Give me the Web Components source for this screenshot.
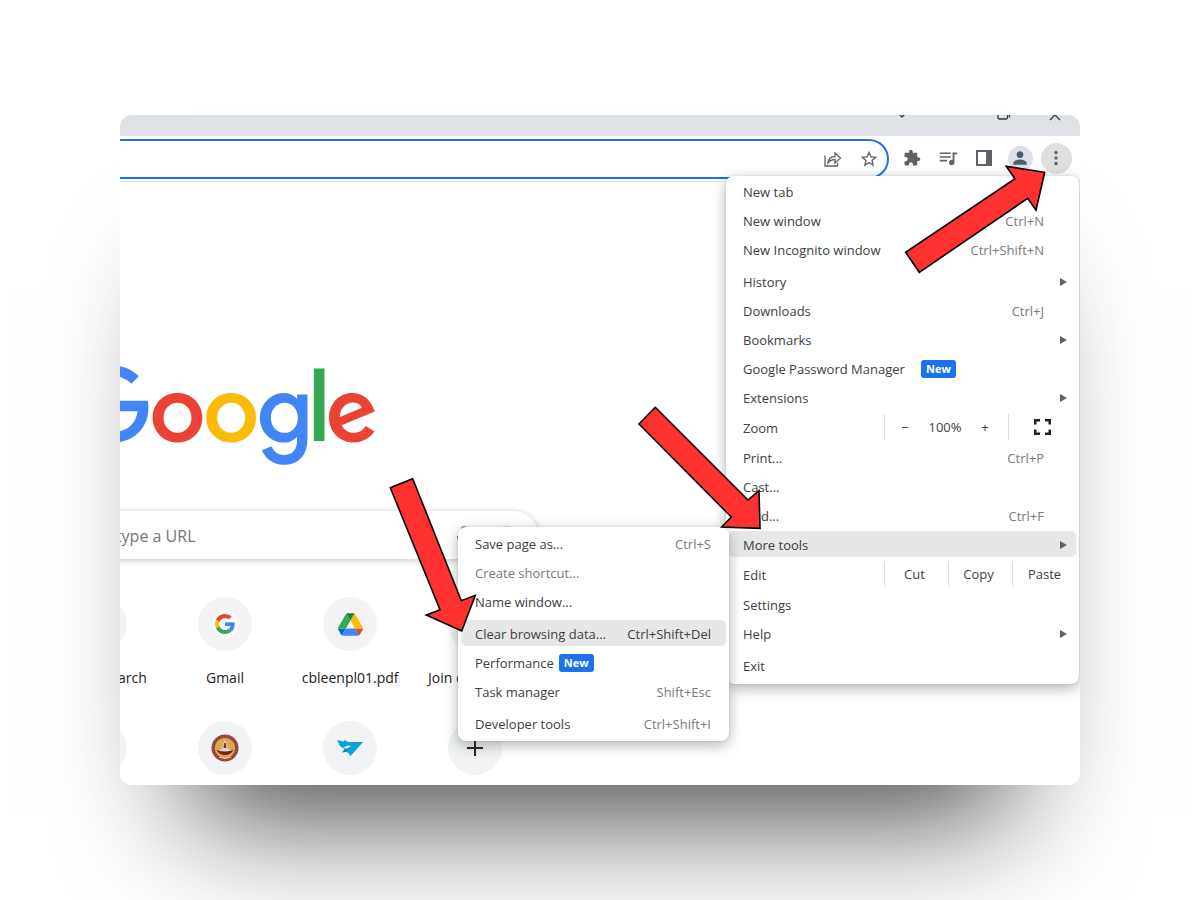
<!DOCTYPE html>
<html lang="en">
<head>
<meta charset="utf-8">
<title>Clear browsing data from the browser menu</title>
<style>
  body {
    margin: 0;
    min-height: 100vh;
    background: #fff;
    color: #3c4043;
    font: 13px/18px "Open Sans", "Noto Sans", sans-serif;
    overflow: hidden;
  }
</style>
</head>
<body>
<demo-stage>
  <browser-window>
    <tab-strip slot="tabs"></tab-strip>
    <tool-bar slot="toolbar"></tool-bar>
    <new-tab-page>
      <site-tile></site-tile>
      <site-tile>Google Search</site-tile>
      <site-tile icon="google">Gmail</site-tile>
      <site-tile icon="drive">cbleenpl01.pdf</site-tile>
      <site-tile>Join classroom</site-tile>
      <site-tile bare></site-tile>
      <site-tile bare></site-tile>
      <site-tile bare icon="lamp"></site-tile>
      <site-tile bare icon="bird"></site-tile>
      <site-tile bare icon="plus"></site-tile>
    </new-tab-page>

    <menu-panel slot="overlay" class="main">
      <menu-item>New tab</menu-item>
      <menu-item>New window<span slot="shortcut">Ctrl+N</span></menu-item>
      <menu-item>New Incognito window<span slot="shortcut">Ctrl+Shift+N</span></menu-item>
      <menu-item group submenu>History</menu-item>
      <menu-item>Downloads<span slot="shortcut">Ctrl+J</span></menu-item>
      <menu-item submenu>Bookmarks</menu-item>
      <menu-item>Google Password Manager<new-badge slot="badge" class="wide">New</new-badge></menu-item>
      <menu-item submenu>Extensions</menu-item>
      <zoom-row></zoom-row>
      <menu-item tall>Print...<span slot="shortcut">Ctrl+P</span></menu-item>
      <menu-item>Cast...</menu-item>
      <menu-item>Find...<span slot="shortcut">Ctrl+F</span></menu-item>
      <menu-item submenu active>More tools</menu-item>
      <edit-row></edit-row>
      <menu-item tall>Settings</menu-item>
      <menu-item submenu>Help</menu-item>
      <menu-item group>Exit</menu-item>
    </menu-panel>

    <menu-panel slot="overlay" class="sub">
      <menu-item>Save page as...<span slot="shortcut">Ctrl+S</span></menu-item>
      <menu-item disabled>Create shortcut...</menu-item>
      <menu-item>Name window...</menu-item>
      <menu-item group active>Clear browsing data...<span slot="shortcut">Ctrl+Shift+Del</span></menu-item>
      <menu-item>Performance<new-badge slot="badge">New</new-badge></menu-item>
      <menu-item>Task manager<span slot="shortcut">Shift+Esc</span></menu-item>
      <menu-item group>Developer tools<span slot="shortcut">Ctrl+Shift+I</span></menu-item>
    </menu-panel>

    <pointer-arrows slot="overlay"></pointer-arrows>
  </browser-window>
</demo-stage>

<script>
const define = (name, html, setup) => {
  const template = document.createElement('template');
  template.innerHTML = html;
  customElements.define(name, class extends HTMLElement {
    constructor() {
      super();
      this.attachShadow({ mode: 'open' }).append(template.content.cloneNode(true));
    }
    connectedCallback() {
      if (setup) setup(this, this.shadowRoot);
    }
  });
};

define('demo-stage', `
  <style>
    :host { display: flex; justify-content: center; padding: 115px 10% 0; }
    ::slotted(*) { flex: 1; min-width: 0; }
  </style>
  <slot></slot>`);

define('browser-window', `
  <style>
    :host { display: block; border-radius: 12px; box-shadow: 0 100px 120px -70px rgba(0,0,0,.75); }
    .frame { position: relative; overflow: hidden; border-radius: inherit; background: #fff; }
    ::slotted(menu-panel) { position: absolute; }
    ::slotted(.main) { top: 61px; right: 1px; width: 353px; }
    ::slotted(.sub) { top: 412px; right: 351px; width: 271px; padding: 3px 3px 5px; --arrow-col: 15px; }
    ::slotted(pointer-arrows) { position: absolute; top: 0; right: 0; }
  </style>
  <div class="frame">
    <slot name="tabs"></slot>
    <slot name="toolbar"></slot>
    <slot></slot>
    <slot name="overlay"></slot>
  </div>`);

define('tab-strip', `
  <style>
    :host { display: flex; justify-content: flex-end; align-items: flex-start; height: 21px; background: #dee1e6; }
    button { width: 51px; height: 8px; padding: 0; border: 0; background: none; display: flex; justify-content: center; }
    .first { margin-right: 51px; }
    svg { display: block; fill: none; stroke: #333; stroke-width: 1.3; }
  </style>
  <button class="first" aria-label="Search tabs"><svg width="14" height="8"><path d="M4-1l3 3 3-3"/></svg></button>
  <button aria-label="Restore"><svg width="14" height="8"><path d="M1-2v4.500q0 1.500 1.500 1.500h6.500q1.500 0 1.500-1.500v-4.500M12.500-2v4.500"/></svg></button>
  <button aria-label="Close"><svg width="14" height="8"><path d="M2 5l5-5 5 5"/></svg></button>`);

define('tool-bar', `
  <style>
    :host { display: flex; align-items: flex-start; height: 46px; box-sizing: border-box; padding: 3px 6px 0 0; background: #fff; border-bottom: 1px solid #e6e8eb; }
    .omnibox { flex: 1; min-width: 0; height: 40px; box-sizing: border-box; display: flex; align-items: center; border: 2px solid #1a73e8; border-left: 0; border-radius: 0 20px 20px 0; margin-right: 5px; }
    input { flex: 1; min-width: 0; border: 0; outline: 0; background: none; font: inherit; }
    button { width: 36px; height: 38px; flex: none; padding: 0; border: 0; background: none; display: grid; place-items: center; color: #5f6368; }
    .omnibox button { height: 36px; }
    svg { display: block; fill: currentColor; }
    .dot { width: 31px; height: 31px; border-radius: 50%; background: #dfdfdf; display: grid; place-items: center; }
    .face { width: 25px; height: 25px; border-radius: 50%; background: #dde1e7; display: grid; place-items: center; color: #4d5b73; }
  </style>
  <div class="omnibox">
    <input aria-label="Address bar">
    <button aria-label="Share"><svg width="20" height="18" viewBox="0 0 20 18" style="fill:none;stroke:currentColor;stroke-width:1.300"><path d="M2 5.500v10.500h12.500v-3M5 13c.5-4.500 3-6.500 7-6.500v-3.500l5.500 5-5.500 5v-3.500c-3 0-5 .8-7 3.500z"/></svg></button>
    <button aria-label="Bookmark this tab"><svg width="20" height="20" viewBox="0 0 24 24"><path d="M22 9.240l-7.190-.62L12 2 9.190 8.630 2 9.240l5.460 4.730L5.820 21 12 17.270 18.180 21l-1.630-7.030L22 9.240zM12 15.400l-3.760 2.270 1-4.280-3.320-2.880 4.380-.38L12 6.100l1.710 4.040 4.380.38-3.320 2.880 1 4.280L12 15.400z"/></svg></button>
  </div>
  <button aria-label="Extensions"><svg width="18" height="18" viewBox="0 0 24 24"><path d="M20.500 11H19V7c0-1.100-.9-2-2-2h-4V3.500C13 2.120 11.880 1 10.500 1S8 2.120 8 3.500V5H4c-1.100 0-1.990.9-1.990 2v3.800H3.500c1.490 0 2.700 1.210 2.700 2.700s-1.210 2.700-2.700 2.700H2V20c0 1.100.9 2 2 2h3.800v-1.500c0-1.490 1.210-2.700 2.700-2.700s2.700 1.210 2.700 2.700V22H17c1.100 0 2-.9 2-2v-4h1.500c1.380 0 2.500-1.120 2.500-2.500S21.880 11 20.500 11z"/></svg></button>
  <button aria-label="Media controls"><svg width="22" height="22" viewBox="0 0 24 24"><path d="M15 6H3v1.700h12V6zm0 4H3v1.700h12V10zM3 15.700h8V14H3v1.700zM17 6v8.180c-.31-.11-.65-.18-1-.18-1.660 0-3 1.340-3 3s1.340 3 3 3 3-1.340 3-3V8h3V6h-5z"/></svg></button>
  <button aria-label="Side panel"><svg width="16" height="16"><path fill-rule="evenodd" d="M0 0h16v16H0zM2 2v12h8V2z"/></svg></button>
  <button aria-label="Profile"><span class="face"><svg width="18" height="18" viewBox="0 0 24 24"><path d="M12 12c2.500 0 4.500-2 4.500-4.500S14.500 3 12 3 7.500 5 7.500 7.500 9.500 12 12 12zm0 2c-3.500 0-9 1.500-9 5v2h18v-2c0-3.500-5.500-5-9-5z"/></svg></span></button>
  <button aria-label="Customize and control"><span class="dot"><svg width="4" height="16"><circle cx="2" cy="2.500" r="1.700"/><circle cx="2" cy="8" r="1.700"/><circle cx="2" cy="13.500" r="1.700"/></svg></span></button>`);

define('google-logo', `
  <style>:host, svg { display: block; }</style>
  <svg width="304" height="103" viewBox="0 0 272 92" role="img" aria-label="Google">
    <path fill="#ea4335" d="M115.750 47.180c0 12.770-9.990 22.180-22.250 22.180s-22.250-9.410-22.250-22.180C71.250 34.320 81.240 25 93.500 25s22.250 9.320 22.250 22.180zm-9.740 0c0-7.980-5.790-13.440-12.510-13.440S80.990 39.200 80.990 47.180c0 7.900 5.790 13.440 12.510 13.440s12.510-5.550 12.510-13.440z"/>
    <path fill="#fbbc05" d="M163.750 47.180c0 12.770-9.990 22.180-22.250 22.180s-22.250-9.410-22.250-22.180c0-12.850 9.990-22.180 22.250-22.180s22.250 9.320 22.250 22.180zm-9.740 0c0-7.980-5.790-13.440-12.510-13.440s-12.510 5.460-12.510 13.440c0 7.900 5.790 13.440 12.510 13.440s12.510-5.550 12.510-13.440z"/>
    <path fill="#4285f4" d="M209.750 26.340v39.820c0 16.380-9.660 23.070-21.080 23.070-10.750 0-17.220-7.190-19.660-13.070l8.480-3.530c1.510 3.610 5.210 7.870 11.170 7.870 7.310 0 11.840-4.510 11.840-13v-3.190h-.34c-2.180 2.690-6.380 5.040-11.680 5.040-11.090 0-21.250-9.660-21.250-22.090 0-12.520 10.160-22.260 21.250-22.260 5.290 0 9.490 2.350 11.680 4.960h.34v-3.610h9.250zm-8.560 20.920c0-7.810-5.210-13.520-11.840-13.520-6.720 0-12.350 5.710-12.350 13.520 0 7.730 5.630 13.360 12.350 13.360 6.630 0 11.840-5.630 11.840-13.360z"/>
    <path fill="#34a853" d="M225 3v65h-9.500V3h9.500z"/>
    <path fill="#ea4335" d="M262.020 54.480l7.560 5.040c-2.440 3.610-8.320 9.830-18.480 9.830-12.600 0-22.010-9.740-22.010-22.180 0-13.190 9.490-22.180 20.920-22.180 11.510 0 17.140 9.160 18.980 14.110l1.010 2.520-29.650 12.280c2.270 4.450 5.800 6.720 10.750 6.720 4.960 0 8.400-2.440 10.920-6.140zm-23.270-7.980l19.820-8.230c-1.090-2.770-4.370-4.700-8.230-4.700-4.950 0-11.840 4.370-11.590 12.930z"/>
    <path fill="#4285f4" d="M35.290 41.410V32H67c.31 1.640.47 3.580.47 5.680 0 7.060-1.930 15.790-8.150 22.010-6.050 6.300-13.780 9.660-24.020 9.660C16.320 69.350.36 53.890.36 34.910.36 15.930 16.320.47 35.300.47c10.500 0 17.980 4.120 23.600 9.490l-6.640 6.640c-4.030-3.780-9.490-6.720-16.970-6.720-13.860 0-24.700 11.170-24.700 25.030 0 13.860 10.840 25.030 24.700 25.030 8.990 0 14.110-3.610 17.390-6.890 2.660-2.660 4.410-6.460 5.100-11.650l-22.490.01z"/>
  </svg>`);

/* The page is wider than the visible part of the window and runs out on its left. */
define('new-tab-page', `
  <style>
    :host { display: block; width: 626px; margin-left: -208px; padding: 183px 0 10px; }
    google-logo { width: 304px; margin: 0 auto; }
    .search { display: flex; align-items: center; gap: 18px; height: 48px; box-sizing: border-box; margin: 43px 0 38px; padding: 2px 20px 0 72px; border-radius: 24px; background: #fff; box-shadow: 0 1px 6px rgba(32,33,36,.28); }
    input { flex: 1; min-width: 0; border: 0; outline: 0; padding: 0; background: none; font: 16px/24px "Open Sans", "Noto Sans", sans-serif; }
    input::placeholder { color: #757575; opacity: 1; }
    svg { display: block; flex: none; }
    .tiles { display: grid; grid-template-columns: repeat(5, 1fr); row-gap: 34px; }
  </style>
  <google-logo></google-logo>
  <div class="search">
    <input type="search" aria-label="Search" placeholder="Search Google or type a URL">
    <svg width="24" height="24" viewBox="0 0 24 24"><path fill="#4285f4" d="M12 15c1.700 0 3-1.300 3-3V5c0-1.700-1.300-3-3-3S9 3.300 9 5v7c0 1.700 1.300 3 3 3z"/><path fill="#34a853" d="M11 18h2v4h-2z"/><path fill="#fbbc05" d="M7 12H5c0 2 1 4 2 5l1.500-1.500C7.500 14.500 7 13.500 7 12z"/><path fill="#ea4335" d="M12 17c-2.800 0-5-2.200-5-5H5c0 4 3 7 7 7s7-3 7-7h-2c0 2.800-2.200 5-5 5z"/></svg>
    <svg width="24" height="24" viewBox="0 0 24 24" fill="none" stroke-width="2.500"><path stroke="#4285f4" d="M9 4h6q4 0 5 5"/><path stroke="#ea4335" d="M4 12V9q0-3 2-4"/><path stroke="#fbbc05" d="M4 14q0 6 6 6"/><circle cx="12" cy="12" r="3" stroke="#4285f4"/><circle cx="18" cy="18" r="1" stroke="#34a853"/></svg>
  </div>
  <div class="tiles"><slot></slot></div>`);

const tileIcons = {
  google: `<svg width="26" height="26" viewBox="0 0 26 26"><circle cx="13" cy="13" r="13" fill="#fff"/><g transform="translate(3 3) scale(.417)"><path fill="#ea4335" d="M24 9.500c3.540 0 6.710 1.220 9.210 3.600l6.850-6.850C35.900 2.380 30.470 0 24 0 14.620 0 6.510 5.380 2.560 13.220l7.980 6.190C12.430 13.720 17.740 9.500 24 9.500z"/><path fill="#4285f4" d="M46.980 24.550c0-1.570-.15-3.090-.38-4.550H24v9.020h12.940c-.58 2.960-2.260 5.480-4.780 7.180l7.730 6c4.510-4.180 7.090-10.360 7.090-17.650z"/><path fill="#fbbc05" d="M10.530 28.590c-.48-1.450-.76-2.990-.76-4.590s.27-3.140.76-4.590l-7.980-6.190C.92 16.460 0 20.120 0 24c0 3.880.92 7.540 2.560 10.780l7.970-6.190z"/><path fill="#34a853" d="M24 48c6.480 0 11.930-2.130 15.890-5.810l-7.730-6c-2.150 1.450-4.920 2.300-8.160 2.300-6.260 0-11.570-4.220-13.470-9.910l-7.980 6.190C6.510 42.620 14.620 48 24 48z"/></g></svg>`,
  drive: `<svg width="25" height="23" viewBox="0 0 87.300 78"><path d="m6.600 66.850 3.850 6.650c.8 1.400 1.950 2.500 3.300 3.300l13.750-23.800h-27.500c0 1.550.4 3.100 1.200 4.500z" fill="#0066da"/><path d="m43.650 25-13.750-23.800c-1.350.8-2.500 1.900-3.300 3.300l-25.400 44a9.060 9.060 0 0 0 -1.200 4.500h27.500z" fill="#34a853"/><path d="m73.550 76.800c1.350-.8 2.500-1.900 3.300-3.300l1.600-2.750 7.650-13.250c.8-1.400 1.200-2.950 1.200-4.500h-27.500l5.850 11.500z" fill="#ea4335"/><path d="m43.650 25 13.750-23.800c-1.350-.8-2.900-1.200-4.500-1.200h-18.500c-1.600 0-3.150.45-4.500 1.200z" fill="#188038"/><path d="m59.800 53h-32.300l-13.750 23.800c1.350.8 2.900 1.200 4.500 1.200h50.800c1.600 0 3.150-.45 4.500-1.200z" fill="#4285f4"/><path d="m73.400 26.500-12.700-22c-.8-1.400-1.950-2.500-3.300-3.300l-13.750 23.800 16.150 28h27.450c0-1.550-.4-3.100-1.200-4.500z" fill="#fbbc04"/></svg>`,
  lamp: `<svg width="28" height="28" viewBox="0 0 28 28"><circle cx="14" cy="14" r="13.500" fill="#943b3e"/><circle cx="14" cy="14" r="12" fill="none" stroke="#c08a6a" stroke-width="1" stroke-dasharray="1 2"/><circle cx="14" cy="14" r="10.300" fill="#d9a74c"/><path d="M6 16h16c-1 3.500-4.500 5-8 5s-7-1.500-8-5z" fill="#7c1f22"/><path d="M7 16.500q7 2 14 0l-4-2-1.500-6L14 5.500l-1.500 3-1.500 6z" fill="#ddd4c6"/><path d="M13.200 9h1.600l.7 5h-3z" fill="#8a2a2e"/><path d="M8 23q6 3 12 0" fill="none" stroke="#efd79c"/></svg>`,
  bird: `<svg width="26" height="16" viewBox="0 0 26 16"><path d="M0 0l6.500 1.500L8 0l3 2h15L13.500 16l-2-3-2-1-4-.5 2-2L3 6z" fill="#05a3dc"/><path d="M5.500 8l5-2.500 4 .5-4.500 2.500z" fill="#f1f3f4"/><path d="M5 12.500l4-4 1 1.500-1.500 2z" fill="#1c6fa8"/></svg>`,
  plus: `<svg width="18" height="18" viewBox="0 0 18 18"><path d="M9 1v16M1 9h16" stroke="#202124" stroke-width="2"/></svg>`
};

define('site-tile', `
  <style>
    :host { display: block; }
    a { display: flex; flex-direction: column; align-items: center; gap: 18px; color: #202124; text-decoration: none; white-space: nowrap; }
    .disc { width: 54px; height: 54px; border-radius: 50%; background: #f1f3f4; display: grid; place-items: center; }
    .label { height: 18px; font-size: 14px; }
    :host([bare]) .label { display: none; }
    svg { display: block; }
  </style>
  <a href="#"><span class="disc"></span><span class="label"><slot></slot></span></a>`,
  (host, root) => { root.querySelector('.disc').innerHTML = tileIcons[host.getAttribute('icon')] || ''; });

define('menu-panel', `
  <style>
    :host { display: block; box-sizing: border-box; padding: 2px 3px 6px; border-radius: 8px; background: #fff; box-shadow: 0 0 2px rgba(60,64,67,.2), 0 4px 14px rgba(60,64,67,.4); }
    nav { display: grid; gap: 3px; }
  </style>
  <nav><slot></slot></nav>`);

define('menu-item', `
  <style>
    :host { display: block; }
    :host([group]) { margin-top: 3px; }
    button { display: flex; align-items: center; width: 100%; height: 26px; padding: 2px 0 0 14px; box-sizing: border-box; border: 0; border-radius: 5px; background: none; font: inherit; color: inherit; text-align: left; white-space: nowrap; }
    :host([tall]) button { height: 27px; }
    :host([active]) button { background: #e7e7e7; }
    :host([disabled]) button { color: #77797c; }
    .gap { flex: 1; }
    ::slotted([slot="shortcut"]) { color: #77797c; }
    :host([active]) ::slotted([slot="shortcut"]) { color: #3c4043; }
    .arrow { width: var(--arrow-col, 32px); display: flex; justify-content: flex-end; box-sizing: border-box; padding: 0 9px 0 0; }
    svg { display: none; fill: #5f6368; }
    :host([submenu]) svg { display: block; }
  </style>
  <button><slot></slot><slot name="badge"></slot><span class="gap"></span><slot name="shortcut"></slot><span class="arrow"><svg width="7" height="8"><path d="M0 0l7 4-7 4z"/></svg></span></button>`,
  (host, root) => { root.querySelector('button').disabled = host.hasAttribute('disabled'); });

define('new-badge', `
  <style>
    :host { display: block; margin-left: 5px; width: 35px; border-radius: 3px; background: #1a73e8; color: #fff; font: 700 11px/18px "Open Sans", "Noto Sans", sans-serif; text-align: center; }
    :host(.wide) { margin-left: 16px; }
  </style>
  <slot></slot>`);

const rowStyle = `
  :host { display: flex; align-items: center; height: 27px; }
  .label { flex: 1; padding: 2px 0 0 14px; }
  button { height: 26px; padding: 0; border: 0; background: none; font: inherit; color: inherit; }
  .rule { border-left: 1px solid #dcdee1; }`;

define('zoom-row', `
  <style>${rowStyle}
    .level { display: flex; align-items: center; box-sizing: border-box; width: 124px; height: 26px; }
    .level > * { width: 40px; text-align: center; }
    .full { width: 68px; display: grid; place-items: center; color: #202124; }
    svg { display: block; fill: currentColor; }
  </style>
  <span class="label">Zoom</span>
  <span class="level rule"><button aria-label="Make text smaller">−</button><span>100%</span><button aria-label="Make text larger">+</button></span>
  <button class="full rule" aria-label="Full screen"><svg width="17" height="16" viewBox="0 0 17 16"><path d="M0 0h6v2.500H2.500V5.500H0zM11 0h6v5.500h-2.500V2.500H11zM0 10.500h2.500v3H6V16H0zM14.500 10.500H17V16h-6v-2.500h3.500z"/></svg></button>`);

define('edit-row', `
  <style>${rowStyle}
    button { width: 64px; padding-right: 4px; }
    button:last-child { padding-right: 0; }
  </style>
  <span class="label">Edit</span>
  <button class="rule">Cut</button><button class="rule">Copy</button><button class="rule">Paste</button>`);

define('pointer-arrows', `
  <style>
    :host { display: block; pointer-events: none; }
    svg { display: block; fill: #ff3131; stroke: #000; stroke-width: 1.6; }
  </style>
  <svg width="960" height="670" viewBox="120 115 960 670" aria-hidden="true">
    <path d="M905.700 252.300L919.300 272.300 1027.700 198.300 1036 210 1044.700 172.300 1006.300 166.300 1015 178.700z"/>
    <path d="M655.300 407.300L639 424 731.300 517 721.700 527 760 528.300 759 490.700 748 500z"/>
    <path d="M412.700 478.700L390.300 487.700 440 609.700 426.300 615 461.700 631 475.300 595.300 461.300 600.700z"/>
  </svg>`);
</script>
</body>
</html>
